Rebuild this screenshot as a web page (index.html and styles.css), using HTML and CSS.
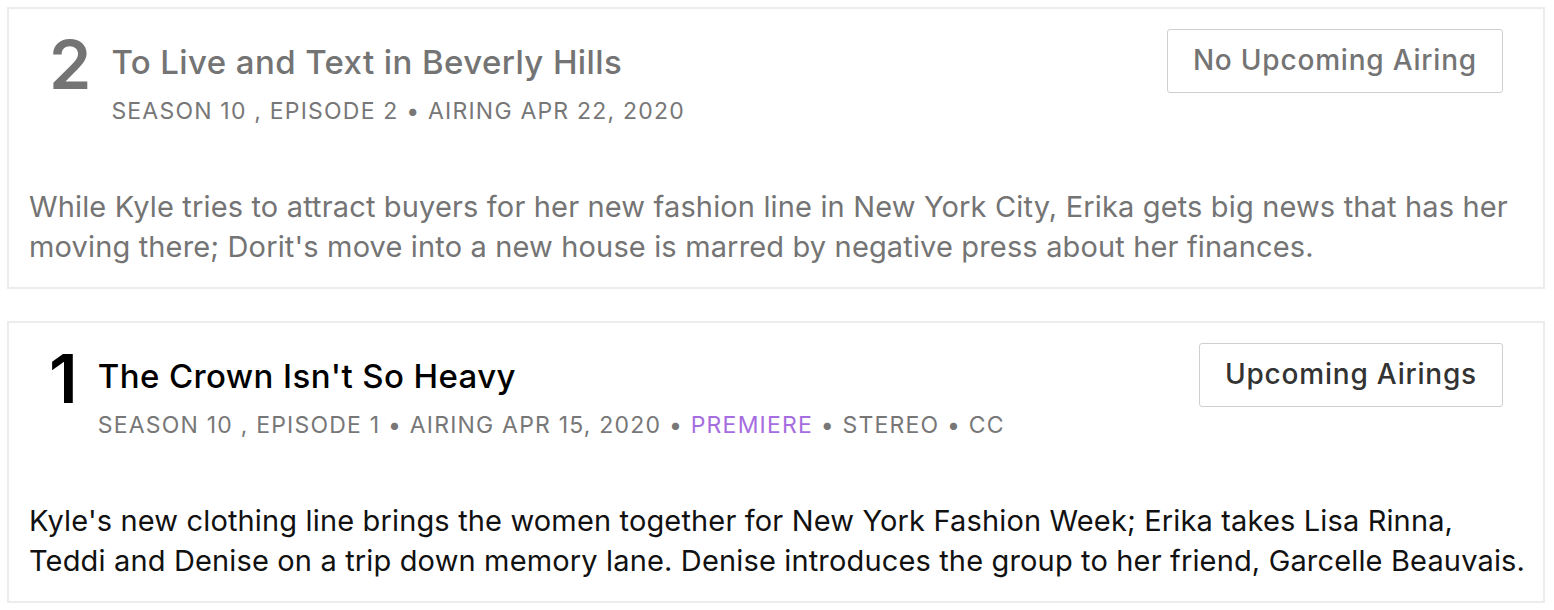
FILE: index.html
```html
<!DOCTYPE html>
<html lang="en">
<head>
<meta charset="utf-8">
<title>Episodes</title>
<link rel="stylesheet" href="styles.css">
</head>
<body>
<div class="list">
  <article class="ep ep--past">
    <div class="ep-head">
      <div class="ep-num">2</div>
      <div class="ep-info">
        <h2 class="ep-title">To Live and Text in Beverly Hills</h2>
        <div class="ep-meta">SEASON 10 , EPISODE 2 • AIRING APR 22, 2020</div>
      </div>
      <button class="ep-btn">No Upcoming Airing</button>
    </div>
    <p class="ep-desc">While Kyle tries to attract buyers for her new fashion line in New York City, Erika gets big news that has her moving there; Dorit's move into a new house is marred by negative press about her finances.</p>
  </article>
  <article class="ep">
    <div class="ep-head">
      <div class="ep-num">1</div>
      <div class="ep-info">
        <h2 class="ep-title">The Crown Isn't So Heavy</h2>
        <div class="ep-meta">SEASON 10 , EPISODE 1 • AIRING APR 15, 2020 • <span class="ep-premiere">PREMIERE</span> • STEREO • CC</div>
      </div>
      <button class="ep-btn">Upcoming Airings</button>
    </div>
    <p class="ep-desc">Kyle's new clothing line brings the women together for New York Fashion Week; Erika takes Lisa Rinna, Teddi and Denise on a trip down memory lane. Denise introduces the group to her friend, Garcelle Beauvais.</p>
  </article>
</div>
</body>
</html>
```

FILE: styles.css
```css
html, body {
  margin: 0;
  padding: 0;
  background: #fff;
}
body {
  font-family: Inter, "Liberation Sans", sans-serif;
  color: #111;
}
.list {
  display: flex;
  flex-direction: column;
  gap: 32px;
  padding: 7px 9px 0 7px;
}
.ep {
  border: 2px solid #ececec;
  height: 282px;
  box-sizing: border-box;
  padding: 20px 14px 0 20px;
}
.ep-head {
  display: flex;
  align-items: flex-start;
  padding-right: 26px;
}
.ep-num {
  font-size: 68px;
  font-weight: 600;
  line-height: 1;
  margin: 1px 20px 0 20px;
  color: #000;
}
.ep-info {
  flex: 1;
  padding-top: 13px;
}
.ep-title {
  margin: 0;
  font-size: 33px;
  font-weight: 500;
  letter-spacing: 0.4px;
  line-height: 40px;
  color: #000;
}
.ep-meta {
  margin-top: 15px;
  font-size: 23px;
  line-height: 28px;
  color: #777;
  letter-spacing: 1.2px;
}
.ep-premiere {
  color: #a66de0;
}
.ep-btn {
  font-family: inherit;
  font-size: 28px;
  font-weight: 500;
  letter-spacing: 0.8px;
  color: #333;
  background: #fff;
  border: 1px solid #cfcfcf;
  border-radius: 3px;
  height: 64px;
  padding: 0 25px 3px;
  margin: 0;
}
.ep-desc {
  margin: 62px 0 0 0;
  font-size: 29px;
  line-height: 40px;
  letter-spacing: 0.15px;
  color: #111;
}
.ep--past .ep-num,
.ep--past .ep-title,
.ep--past .ep-desc,
.ep--past .ep-btn {
  color: #747474;
}
```
